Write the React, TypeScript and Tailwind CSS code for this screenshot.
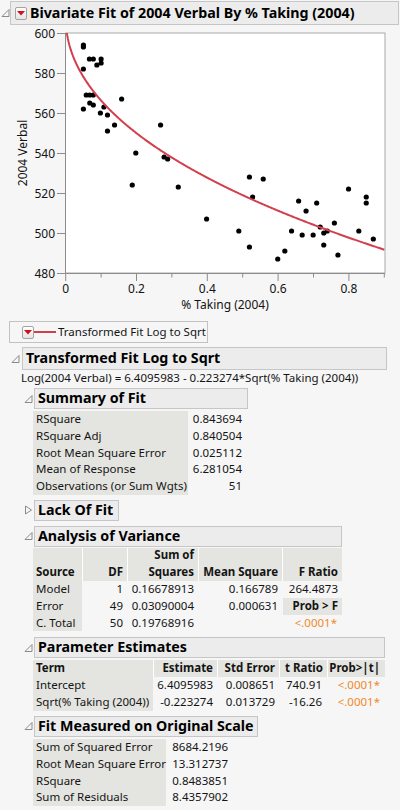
import React from "react";

const points: [number, number][] = [
  [0.05, 594], [0.05, 593], [0.05, 582], [0.067, 587], [0.078, 587], [0.1, 587], [0.1, 585], [0.088, 584],
  [0.058, 569], [0.068, 569], [0.078, 569], [0.068, 565], [0.078, 564], [0.05, 562], [0.098, 560], [0.108, 563],
  [0.118, 559], [0.118, 551], [0.138, 554], [0.158, 567], [0.198, 540], [0.188, 524], [0.268, 554], [0.278, 538],
  [0.288, 537], [0.318, 523],
  [0.398, 507], [0.489, 501], [0.519, 528], [0.519, 493], [0.528, 518], [0.558, 527], [0.599, 487], [0.619, 491],
  [0.638, 501], [0.658, 516], [0.668, 499], [0.679, 511], [0.699, 499], [0.709, 515], [0.719, 503], [0.729, 500],
  [0.729, 494], [0.739, 501], [0.759, 505], [0.769, 489], [0.799, 522], [0.828, 501], [0.849, 518], [0.849, 515],
  [0.869, 497],
];

const px = (x: number) => 65.7 + x * 354;
const py = (y: number) => 33 + (600 - y) * 2;

function curvePath() {
  const parts: string[] = [];
  for (let i = 0; i <= 450; i++) {
    const x = (i / 450) * 0.9;
    const y = Math.exp(6.4095983 - 0.223274 * Math.sqrt(x));
    parts.push(`${i === 0 ? "M" : "L"}${px(x).toFixed(2)},${py(y).toFixed(2)}`);
  }
  return parts.join(" ");
}

function Disclosure({ open = true }: { open?: boolean }) {
  return (
    <svg width="9" height="10" viewBox="0 0 9 10" className="shrink-0">
      {open ? (
        <polygon points="8,1.5 8,8.5 1,8.5" fill="none" stroke="#8a8a8a" strokeWidth="1" />
      ) : (
        <polygon points="1.5,1 7.5,5 1.5,9" fill="none" stroke="#8a8a8a" strokeWidth="1" />
      )}
    </svg>
  );
}

function RedButton() {
  return (
    <div className="flex h-[13px] w-[12px] shrink-0 items-center justify-center rounded-[2px] border border-[#a4a4a4] bg-gradient-to-b from-white to-[#e4e4e4]">
      <svg width="8" height="5" viewBox="0 0 8 5">
        <polygon points="0,0 8,0 4,4.5" fill="#d0101a" />
      </svg>
    </div>
  );
}

function SectionHeader({
  title,
  width,
  open = true,
  className = "",
}: {
  title: string;
  width: string;
  open?: boolean;
  className?: string;
}) {
  return (
    <div className={`flex items-center pl-[24px] ${className}`}>
      <Disclosure open={open} />
      <div
        className={`ml-[1px] flex h-[21px] items-center border border-[#c6c6c6] bg-[#ececec] pl-[3px] text-[14.25px] font-bold text-black ${width}`}
      >
        {title}
      </div>
    </div>
  );
}

function Plot() {
  const xTicks = [0, 0.2, 0.4, 0.6, 0.8];
  const minor = [0.1, 0.3, 0.5, 0.7, 0.9];
  const yTicks = [600, 580, 560, 540, 520, 500, 480];
  return (
    <svg width="400" height="294" viewBox="0 25 400 294" className="block">
      <defs>
        <clipPath id="plotclip">
          <rect x="65.5" y="33" width="319.5" height="240" />
        </clipPath>
      </defs>
      <rect x="65.5" y="33" width="319.5" height="240" fill="#ffffff" stroke="#a9a9a9" strokeWidth="1" />
      <line x1="65.5" y1="33" x2="65.5" y2="273.5" stroke="#8c8c8c" />
      <line x1="65.5" y1="273.5" x2="385" y2="273.5" stroke="#8c8c8c" />
      {yTicks.map((t) => (
        <g key={t}>
          <line x1="57" y1={py(t) + 0.5} x2="65.5" y2={py(t) + 0.5} stroke="#8c8c8c" />
          <text x="55" y={py(t) + 4.5} textAnchor="end" fontSize="12" fill="#141414">
            {t}
          </text>
        </g>
      ))}
      {xTicks.map((t) => (
        <g key={t}>
          <line x1={px(t)} y1="273.5" x2={px(t)} y2="281" stroke="#8c8c8c" />
          <text x={px(t)} y="292.5" textAnchor="middle" fontSize="12" fill="#141414">
            {t === 0 ? "0" : t.toFixed(1)}
          </text>
        </g>
      ))}
      {minor.map((t) => (
        <line key={t} x1={px(t)} y1="273.5" x2={px(t)} y2="277.5" stroke="#8c8c8c" />
      ))}
      <text x="225" y="309" textAnchor="middle" fontSize="12" fill="#141414">
        % Taking (2004)
      </text>
      <text
        x="23"
        y="153"
        textAnchor="middle"
        fontSize="12"
        fill="#141414"
        transform="rotate(-90 23 153)"
        dy="4"
      >
        2004 Verbal
      </text>
      <g clipPath="url(#plotclip)">
        {points.map(([x, y], i) => (
          <circle key={i} cx={px(x)} cy={py(y)} r="2.6" fill="#000000" />
        ))}
        <path d={curvePath()} fill="none" stroke="#d2404e" strokeWidth="2" />
      </g>
    </svg>
  );
}

const grayCell = "bg-[#e4e4e0]";

export default function App() {
  const summary = [
    ["RSquare", "0.843694"],
    ["RSquare Adj", "0.840504"],
    ["Root Mean Square Error", "0.025112"],
    ["Mean of Response", "6.281054"],
    ["Observations (or Sum Wgts)", "51"],
  ];
  const original = [
    ["Sum of Squared Error", "8684.2196"],
    ["Root Mean Square Error", "13.312737"],
    ["RSquare", "0.8483851"],
    ["Sum of Residuals", "8.4357902"],
  ];

  return (
    <div className="h-[810px] w-[400px] overflow-hidden whitespace-nowrap bg-[#f6f6f6] font-['Noto_Sans','Open_Sans',sans-serif] text-[11.5px] leading-[16.8px] text-[#141414]">
      {/* report title */}
      <div className="mt-[1px] flex items-center pl-[1px]">
        <Disclosure />
        <div className="flex h-[24px] w-[389px] items-center gap-[3px] border border-[#c6c6c6] bg-[#ececec] pl-[4px] text-[14.25px] font-bold text-black">
          <RedButton />
          <span>Bivariate Fit of 2004 Verbal By % Taking (2004)</span>
        </div>
      </div>

      <Plot />

      {/* legend */}
      <div className="ml-[9px] mt-[2px] flex h-[22px] w-[199px] items-center border border-[#c2c2c2] pl-[12px]">
        <RedButton />
        <div className="h-[2px] w-[22px] bg-[#d2404e]" />
        <span className="ml-[2px]">Transformed Fit Log to Sqrt</span>
      </div>

      {/* transformed fit */}
      <div className="mt-[4px] flex items-center pl-[11px]">
        <Disclosure />
        <div className="ml-[2px] flex h-[23px] w-[365px] items-center border border-[#c6c6c6] bg-[#ececec] pl-[3px] text-[14.25px] font-bold text-black">
          Transformed Fit Log to Sqrt
        </div>
      </div>
      <div className="flex h-[16px] items-center pl-[21px]">
        Log(2004 Verbal) = 6.4095983 - 0.223274*Sqrt(% Taking (2004))
      </div>

      {/* summary of fit */}
      <SectionHeader title="Summary of Fit" width="w-[214px]" className="mt-[2px]" />
      <div className="ml-[33px] mt-[2px] flex w-[213px] flex-col">
        {summary.map(([label, value]) => (
          <div key={label} className="flex h-[16.8px] items-center">
            <div className={`flex h-full w-[155px] items-center pl-[3px] ${grayCell}`}>{label}</div>
            <div className="w-[58px] pr-[4px] text-right">{value}</div>
          </div>
        ))}
      </div>

      {/* lack of fit */}
      <SectionHeader title="Lack Of Fit" width="w-[85px]" open={false} className="mt-[5px]" />

      {/* analysis of variance */}
      <SectionHeader title="Analysis of Variance" width="w-[308px]" className="mt-[5px]" />
      <div className="ml-[33px] mt-[1px] w-[309px]">
        <div className="flex h-[33px] gap-[1px] bg-white font-bold">
          <div className={`flex w-[49px] items-end pl-[3px] ${grayCell}`}>Source</div>
          <div className={`flex w-[44px] items-end justify-end pr-[4px] ${grayCell}`}>DF</div>
          <div className={`flex w-[70px] flex-col items-end justify-end pr-[4px] ${grayCell}`}>
            <span>Sum of</span>
            <span>Squares</span>
          </div>
          <div className={`flex w-[83px] items-end justify-end pr-[4px] ${grayCell}`}>Mean Square</div>
          <div className={`flex w-[59px] items-end justify-end pr-[4px] ${grayCell}`}>F Ratio</div>
        </div>
        {[
          ["Model", "1", "0.16678913", "0.166789", "264.4873"],
          ["Error", "49", "0.03090004", "0.000631", "prob"],
          ["C. Total", "50", "0.19768916", "", "p"],
        ].map(([src, df, ss, ms, fr]) => (
          <div key={src} className="flex h-[16.8px] gap-[1px]">
            <div className={`flex w-[49px] items-center pl-[3px] ${grayCell}`}>{src}</div>
            <div className="w-[44px] pr-[4px] text-right">{df}</div>
            <div className="w-[70px] pr-[4px] text-right">{ss}</div>
            <div className="w-[83px] pr-[4px] text-right">{ms}</div>
            {fr === "prob" ? (
              <div className={`w-[59px] pr-[4px] text-right font-bold ${grayCell}`}>Prob &gt; F</div>
            ) : fr === "p" ? (
              <div className="w-[59px] pr-[5px] text-right text-[#f08a2a]">&lt;.0001*</div>
            ) : (
              <div className="w-[59px] pr-[4px] text-right">{fr}</div>
            )}
          </div>
        ))}
      </div>

      {/* parameter estimates */}
      <SectionHeader title="Parameter Estimates" width="w-[351px]" className="mt-[6px]" />
      <div className="ml-[33px] mt-[2px] w-[352px]">
        <div className="flex h-[17px] gap-[1px] bg-white font-bold">
          <div className={`flex w-[120px] items-center pl-[3px] ${grayCell}`}>Term</div>
          <div className={`flex w-[63px] items-center justify-end pr-[4px] ${grayCell}`}>Estimate</div>
          <div className={`flex w-[61px] items-center justify-end pr-[4px] ${grayCell}`}>Std Error</div>
          <div className={`flex w-[47px] items-center justify-end pr-[4px] ${grayCell}`}>t Ratio</div>
          <div className={`flex w-[57px] items-center justify-end pr-[5px] ${grayCell}`}>Prob&gt;|t|</div>
        </div>
        {[
          ["Intercept", "6.4095983", "0.008651", "740.91"],
          ["Sqrt(% Taking (2004))", "-0.223274", "0.013729", "-16.26"],
        ].map(([term, est, se, t]) => (
          <div key={term} className="flex h-[16.8px] gap-[1px]">
            <div className={`flex w-[120px] items-center pl-[3px] ${grayCell}`}>{term}</div>
            <div className="w-[63px] pr-[4px] text-right">{est}</div>
            <div className="w-[61px] pr-[4px] text-right">{se}</div>
            <div className="w-[47px] pr-[5px] text-right">{t}</div>
            <div className="w-[57px] pr-[5px] text-right text-[#f08a2a]">&lt;.0001*</div>
          </div>
        ))}
      </div>

      {/* fit measured on original scale */}
      <SectionHeader title="Fit Measured on Original Scale" width="w-[224px]" className="mt-[5px]" />
      <div className="ml-[33px] mt-[2px] flex w-[199px] flex-col">
        {original.map(([label, value]) => (
          <div key={label} className="flex h-[16.8px] items-center">
            <div className={`flex h-full w-[133px] items-center pl-[3px] ${grayCell}`}>{label}</div>
            <div className="w-[66px] pr-[4px] text-right">{value}</div>
          </div>
        ))}
      </div>
    </div>
  );
}
